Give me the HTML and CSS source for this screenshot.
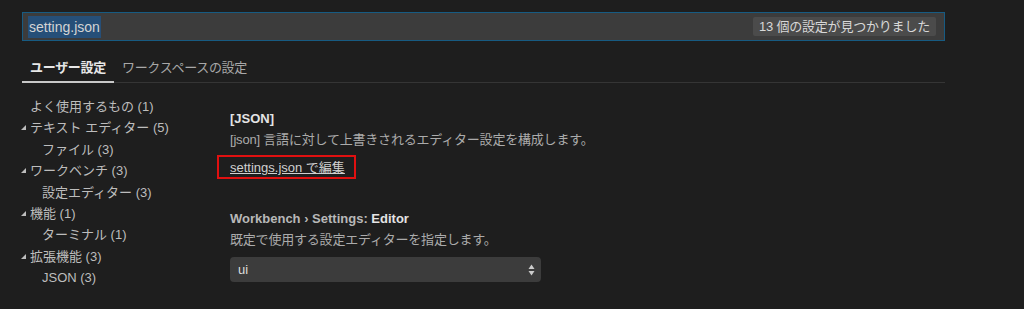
FILE: index.html
```html
<!DOCTYPE html>
<html>

<head>
    <title>設定</title>
    <link rel="stylesheet" href="styles.css">
</head>

<body>
    <div class="settings">
        <div class="search">
            <span class="query">setting.json</span>
            <span class="count">13 個の設定が見つかりました</span>
        </div>

        <div class="tabs">
            <span class="tab active">ユーザー設定</span>
            <span class="tab">ワークスペースの設定</span>
        </div>

        <div class="body">
            <ul class="tree">
                <li>よく使用するもの (1)</li>
                <li class="group">テキスト エディター (5)</li>
                <li class="child">ファイル (3)</li>
                <li class="group">ワークベンチ (3)</li>
                <li class="child">設定エディター (3)</li>
                <li class="group">機能 (1)</li>
                <li class="child">ターミナル (1)</li>
                <li class="group">拡張機能 (3)</li>
                <li class="child">JSON (3)</li>
            </ul>

            <div class="content">
                <div class="setting">
                    <div class="title">[JSON]</div>
                    <div class="desc">[json] 言語に対して上書きされるエディター設定を構成します。</div>
                    <span class="mark"><a class="edit-link" href="#">settings.json で編集</a></span>
                </div>

                <div class="setting">
                    <div class="title"><span class="category">Workbench › Settings: </span>Editor</div>
                    <div class="desc">既定で使用する設定エディターを指定します。</div>
                    <div class="select">
                        <span>ui</span>
                        <svg width="7" height="12" viewBox="0 0 7 12">
                            <path d="M3.5 0.5 L6.5 5 L0.5 5 Z" fill="#cccccc" />
                            <path d="M0.5 7 L6.5 7 L3.5 11.5 Z" fill="#cccccc" />
                        </svg>
                    </div>
                </div>
            </div>
        </div>
    </div>
</body>

</html>
```

FILE: styles.css
```css
body {
    margin: 0;
    background-color: #1e1e1e;
    color: #cccccc;
    font-family: "Liberation Sans", "Noto Sans CJK JP", sans-serif;
    font-size: 13px;
    height: 309px;
    overflow: hidden;
}

.settings {
    width: 923px;
    padding: 12px 0 0 22px;
}

.search {
    height: 27px;
    border: 1px solid #175b82;
    background-color: #3c3c3c;
    display: flex;
    align-items: center;
    justify-content: space-between;
    padding: 0 8px 0 5px;
}

.query {
    background-color: #264f78;
    color: #d4d4d4;
    font-size: 14px;
    line-height: 22px;
    padding: 0 1px;
}

.count {
    background-color: #4b4b4b;
    color: #d8d8d8;
    line-height: 19px;
    padding: 0 6px;
    border-radius: 2px;
    letter-spacing: -0.2px;
}

.tabs {
    display: flex;
    margin-top: 14px;
    border-bottom: 1px solid #353535;
}

.tab {
    padding: 0 8px;
    line-height: 26px;
    color: #a8a8a8;
    margin-bottom: -1px;
    border-bottom: 2px solid transparent;
    letter-spacing: -0.3px;
}

.tab.active {
    color: #e7e7e7;
    font-weight: bold;
    border-bottom-color: #c8c8c8;
}

.body {
    display: flex;
}

.tree {
    list-style: none;
    margin: 0;
    padding: 13px 0 0 8px;
    width: 187px;
}

.tree li {
    line-height: 21.4px;
    color: #bdbdbd;
    position: relative;
}

.tree li.group::before {
    content: "";
    position: absolute;
    left: -9px;
    top: 8px;
    border-style: solid;
    border-width: 0 0 5px 5px;
    border-color: transparent transparent #bdbdbd transparent;
}

.tree li.child {
    padding-left: 12px;
}

.content {
    padding: 25px 0 0 13px;
}

.setting {
    margin-bottom: 29px;
}

.title {
    font-weight: bold;
    color: #e4e4e4;
    line-height: 21px;
}

.category {
    color: #b8b8b8;
}

.desc {
    color: #ababab;
    line-height: 21px;
    letter-spacing: -0.2px;
}

.mark {
    display: inline-block;
    margin: 5px 0 0 -13px;
    border: 2px solid #e01010;
    padding: 1px 9px 0 11px;
    line-height: 19px;
}

.edit-link {
    color: #d0d0d0;
    text-decoration: underline;
}

.select {
    margin-top: 7px;
    width: 297px;
    height: 25px;
    background-color: #3c3c3c;
    border-radius: 4px;
    display: flex;
    align-items: center;
    justify-content: space-between;
    padding: 0 6px 0 8px;
    color: #dcdcdc;
}
```
